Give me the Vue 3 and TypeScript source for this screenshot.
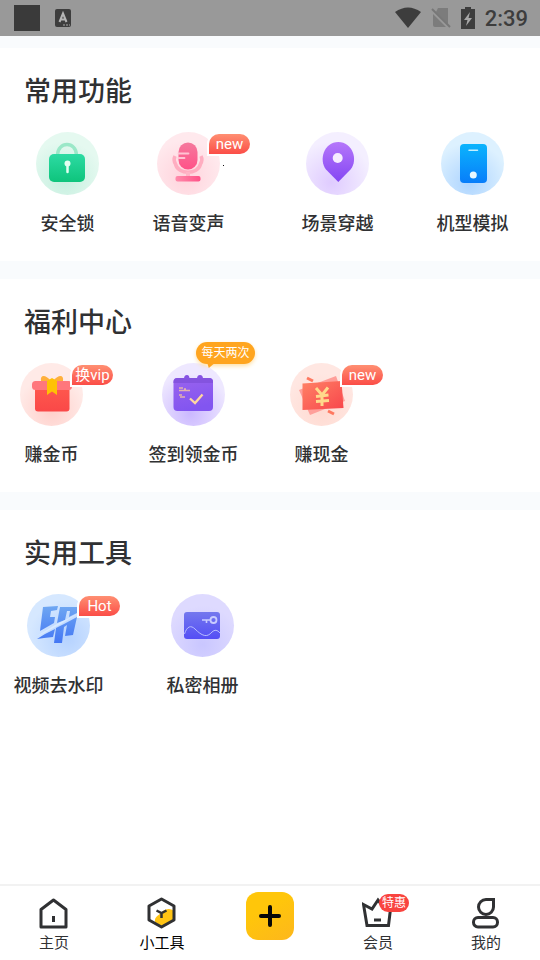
<script setup lang="ts">
type IconName = 'lock' | 'mic' | 'pin' | 'phone' | 'gift' | 'calendar' | 'cash' | 'watermark' | 'album'

interface Tool {
  icon: IconName
  label: string
  badge?: string
  badgeStyle?: 'flag' | 'bubble'
}

interface Section {
  title: string
  tools: Tool[]
}

const sections: Section[] = [
  {
    title: '常用功能',
    tools: [
      { icon: 'lock', label: '安全锁' },
      { icon: 'mic', label: '语音变声', badge: 'new', badgeStyle: 'flag' },
      { icon: 'pin', label: '场景穿越' },
      { icon: 'phone', label: '机型模拟' },
    ],
  },
  {
    title: '福利中心',
    tools: [
      { icon: 'gift', label: '赚金币', badge: '换vip', badgeStyle: 'flag' },
      { icon: 'calendar', label: '签到领金币', badge: '每天两次', badgeStyle: 'bubble' },
      { icon: 'cash', label: '赚现金', badge: 'new', badgeStyle: 'flag' },
    ],
  },
  {
    title: '实用工具',
    tools: [
      { icon: 'watermark', label: '视频去水印', badge: 'Hot', badgeStyle: 'flag' },
      { icon: 'album', label: '私密相册' },
    ],
  },
]

// The badge sticks out past the circle; wider labels already cover part of it.
function spaceClass(tool: Tool): string {
  if (!tool.badge) return ''
  return `space-${Math.min(tool.label.length, 5)}`
}
</script>

<template>
  <div class="page">
    <header class="status">
      <div class="status-left">
        <span class="square"></span>
        <svg width="16" height="18" viewBox="0 0 16 18" aria-hidden="true">
          <rect width="16" height="18" rx="2" fill="#3d3d3d" />
          <path d="M4.500 13L8 4.500L11.500 13M5.500 10.500H10.500" fill="none" stroke="#b5b5b5" stroke-width="2" />
          <path d="M8 16H15" stroke="#aaa" stroke-width="1" stroke-dasharray="2 1" />
        </svg>
      </div>
      <div class="status-right">
        <svg width="26" height="22" viewBox="0 0 26 22" aria-hidden="true">
          <path d="M0 5Q13 -4 26 5L13 21Z" fill="#3d3d3d" />
        </svg>
        <svg width="20" height="22" viewBox="0 0 20 22" aria-hidden="true">
          <path d="M7 1H17V17L5 5ZM2 7L15 20H4Q2 20 2 18Z" fill="#7c7c7c" />
          <path d="M1 2L19 20" stroke="#777" stroke-width="2" />
        </svg>
        <svg width="14" height="22" viewBox="0 0 14 22" aria-hidden="true">
          <path d="M4 0H10V2H14V22H0V2H4Z" fill="#3d3d3d" />
          <path d="M9 5L3 13H6.500L5 19L11 11H7.500Z" fill="#a8a8a8" />
        </svg>
        <time>2:39</time>
      </div>
    </header>

    <main class="content">
      <section v-for="section in sections" :key="section.title" class="group">
        <h2>{{ section.title }}</h2>
        <div class="tools">
          <button v-for="tool in section.tools" :key="tool.label" type="button" class="tool" :class="spaceClass(tool)">
            <span class="figure">
              <span class="circle" :class="tool.icon">
                <svg v-if="tool.icon === 'lock'" viewBox="0 0 63 63" aria-hidden="true">
                  <defs>
                    <linearGradient id="lockFill" x1="0" y1="0" x2="0" y2="1"><stop stop-color="#2ddba3" /><stop offset="1" stop-color="#0ec47c" /></linearGradient>
                  </defs>
                  <path d="M21.500 23C22 9 40 9 40.500 23" fill="none" stroke="#9be8c8" stroke-width="3.500" />
                  <rect x="13" y="22" width="36" height="28" rx="5" fill="url(#lockFill)" />
                  <circle cx="31.500" cy="31.500" r="3" fill="#e3fff1" />
                  <path d="M31.500 32V40" stroke="#e3fff1" stroke-width="2.500" stroke-linecap="round" />
                </svg>
                <svg v-else-if="tool.icon === 'mic'" viewBox="0 0 63 63" aria-hidden="true">
                  <defs>
                    <linearGradient id="micFill" x1="0" y1="0" x2="0" y2="1"><stop stop-color="#f5799d" /><stop offset="1" stop-color="#ff5288" /></linearGradient>
                    <linearGradient id="micBase"><stop stop-color="#ff8bab" /><stop offset="1" stop-color="#ff5288" /></linearGradient>
                  </defs>
                  <path d="M18 24Q16 28 18.500 32C21 43 41 43 43.500 32Q46 28 44 24" fill="none" stroke="#ffadc0" stroke-width="3.500" />
                  <path d="M31 40V45" stroke="#ffb5c7" stroke-width="4" />
                  <rect x="21.500" y="10.500" width="19" height="27" rx="9.500" fill="url(#micFill)" />
                  <path d="M21.500 21.500H31.500M21.500 26H27.500" stroke="#ffc3d3" stroke-width="1.800" stroke-linecap="round" />
                  <rect x="18.500" y="44" width="25" height="5.500" rx="2" fill="url(#micBase)" />
                  <rect x="66" y="33" width="1" height="1" fill="#111" />
                </svg>
                <svg v-else-if="tool.icon === 'pin'" viewBox="0 0 63 63" aria-hidden="true">
                  <defs>
                    <linearGradient id="pinFill" x1="0" y1="0" x2="0" y2="1"><stop stop-color="#b577fa" /><stop offset="1" stop-color="#8446f3" /></linearGradient>
                  </defs>
                  <path d="M32.300 50L20 37.500C12.500 28 18 10 32.300 10C46.500 10 52.500 28 44.500 37.500Z" fill="url(#pinFill)" />
                  <circle cx="31.700" cy="26" r="5" fill="#f6ecff" />
                </svg>
                <svg v-else-if="tool.icon === 'phone'" viewBox="0 0 63 63" aria-hidden="true">
                  <defs>
                    <linearGradient id="phoneFill" x1="0" y1="0" x2="0" y2="1"><stop stop-color="#0bb4fd" /><stop offset="1" stop-color="#087dfa" /></linearGradient>
                  </defs>
                  <rect x="19" y="12" width="27" height="39" rx="4" fill="url(#phoneFill)" />
                  <path d="M28 18.300H36.500" stroke="#c4efff" stroke-width="1.500" stroke-linecap="round" />
                  <circle cx="32.300" cy="43" r="3.500" fill="#e8f7ff" />
                </svg>
                <svg v-else-if="tool.icon === 'gift'" viewBox="0 0 63 63" aria-hidden="true">
                  <defs>
                    <linearGradient id="giftFill" x1="0" y1="0" x2="0" y2="1"><stop stop-color="#ff5b4e" /><stop offset="1" stop-color="#fa4848" /></linearGradient>
                  </defs>
                  <rect x="15" y="20" width="34.500" height="28.500" rx="3" fill="url(#giftFill)" />
                  <rect x="12" y="18" width="40" height="9" rx="3.500" fill="#ff777c" />
                  <path d="M31 18C25 11 20 12 21 18ZM33 18C39 11 44 12 43 18Z" fill="#ffb03c" />
                  <path d="M27 18L32 15L37 18V32L32 28.500L27 32Z" fill="#ffc104" />
                </svg>
                <svg v-else-if="tool.icon === 'calendar'" viewBox="0 0 63 63" aria-hidden="true">
                  <defs>
                    <linearGradient id="calFill" x1="0" y1="0" x2="0.300" y2="1"><stop stop-color="#9a63ee" /><stop offset="1" stop-color="#8255f0" /></linearGradient>
                  </defs>
                  <rect x="11.500" y="15" width="39.500" height="33" rx="4" fill="url(#calFill)" />
                  <path d="M11.500 20V19Q11.500 15 15.500 15H47Q51 15 51 19V20Z" fill="#8453df" />
                  <path d="M22 16Q22 12 25 12Q27.500 12 27.500 16ZM35 16Q35 12 38 12Q41 12 41 16Z" fill="#8653e3" />
                  <path d="M17 25H21M17 27.500H28M22 26H24M17 32H20M18 34H23" fill="none" stroke="#e3b4ae" stroke-width="1.500" />
                  <path d="M28 35.500L33 40L40.500 31.500" fill="none" stroke="#ffd6a0" stroke-width="2.300" />
                </svg>
                <svg v-else-if="tool.icon === 'cash'" viewBox="0 0 63 63" aria-hidden="true">
                  <defs>
                    <linearGradient id="cashFill" x1="0" y1="0" x2="1" y2="1"><stop stop-color="#ff8266" /><stop offset="1" stop-color="#f8454b" /></linearGradient>
                  </defs>
                  <path d="M9 27L46 13L55 38L20 52Z" fill="#ff9f9a" />
                  <path d="M12.500 20.500L51.500 18L53.500 45L12.500 47Z" fill="url(#cashFill)" />
                  <path d="M17 15L23 18M38 48L44 51" stroke="#ff7860" stroke-width="3" />
                  <path d="M26 25L32 32L38 24.500M26 33.500L38.500 32M26 38.500L39 37.500M32 32V43" fill="none" stroke="#ffd98b" stroke-width="3" />
                </svg>
                <svg v-else-if="tool.icon === 'watermark'" viewBox="0 0 63 63" aria-hidden="true">
                  <defs>
                    <linearGradient id="markFill" x1="0" y1="0" x2="0" y2="63" gradientUnits="userSpaceOnUse"><stop offset="0.200" stop-color="#6ea6f2" /><stop offset="0.800" stop-color="#4275f4" /></linearGradient>
                  </defs>
                  <g fill="url(#markFill)">
                    <path d="M16 13L31 12L30 16L24 17L23 23H28L27 29L13 37Z" />
                    <path d="M10 45L18 40L28 35L26 43L17 44Z" />
                    <path d="M33 13H51L50 19L42 23L43 17H40L38 26L30 29Z" />
                    <path d="M29 34L37 30L50 23L46 41L38 42L40 31L37 33L35 49H27Z" />
                  </g>
                  <path d="M10 42L28 31L52 19L34 30L17 39Z" fill="#d8eaff" />
                </svg>
                <svg v-else viewBox="0 0 63 63" aria-hidden="true">
                  <defs>
                    <linearGradient id="albumFill" x1="0" y1="0" x2="0" y2="1"><stop stop-color="#7478ee" /><stop offset="1" stop-color="#544ef5" /></linearGradient>
                  </defs>
                  <rect x="13" y="18" width="36" height="27" rx="3" fill="url(#albumFill)" />
                  <path d="M13.500 40C16 32 20 31 24 35C31 42 36 44 41 38Q45 34 49 39" fill="none" stroke="#b9bdff" stroke-width="1" />
                  <circle cx="42.500" cy="26" r="3" fill="none" stroke="#c9ccff" stroke-width="1.800" />
                  <path d="M39.500 26H31M35.500 26V29" fill="none" stroke="#c9ccff" stroke-width="1.600" />
                </svg>
              </span>
              <span v-if="tool.badge" class="badge" :class="tool.badgeStyle">{{ tool.badge }}</span>
            </span>
            <span class="label">{{ tool.label }}</span>
          </button>
        </div>
      </section>
    </main>

    <nav class="tabs">
      <a href="#home">
        <svg viewBox="0 0 32 34" aria-hidden="true">
          <path d="M15.500 5L28 14.500V32H3V14.500Z" fill="none" stroke="#303133" stroke-width="3" stroke-linejoin="round" />
          <path d="M15.500 21V27" stroke="#303133" stroke-width="3" />
        </svg>
        <span>主页</span>
      </a>
      <a href="#tools" class="active" aria-current="page">
        <svg viewBox="0 0 32 34" aria-hidden="true">
          <path d="M9 27C8 21 14 20 17 16Q23 12 28 16V25L15.500 31Z" fill="#ffc414" />
          <path d="M15.500 4L28 11V25L15.500 32L3 25V11Z" fill="none" stroke="#303133" stroke-width="3" stroke-linejoin="round" />
          <path d="M10.500 15.500L15.500 18L20.500 15.500M15.500 18V23" fill="none" stroke="#303133" stroke-width="2.500" />
        </svg>
        <span>小工具</span>
      </a>
      <button type="button" class="add" aria-label="添加">
        <svg viewBox="0 0 48 48" aria-hidden="true">
          <path d="M24 15V33M15 24H33" stroke="#080808" stroke-width="4" stroke-linecap="round" />
        </svg>
      </button>
      <a href="#member">
        <span class="crown">
          <svg viewBox="0 0 32 34" aria-hidden="true">
            <path d="M1.500 9.500L10 14L16 5L22 13L29 10L26.500 30.500H5Z" fill="none" stroke="#303133" stroke-width="3" />
            <path d="M12 25H19" stroke="#303133" stroke-width="3" />
          </svg>
          <span class="offer">特惠</span>
        </span>
        <span>会员</span>
      </a>
      <a href="#mine">
        <svg viewBox="0 0 32 34" aria-hidden="true">
          <path d="M23.500 4.500V12A7.500 7.500 0 1 1 16 4.500Z" fill="none" stroke="#303133" stroke-width="3" />
          <rect x="3.500" y="22.500" width="24" height="9.500" rx="4.500" fill="none" stroke="#303133" stroke-width="3" />
        </svg>
        <span>我的</span>
      </a>
    </nav>
  </div>
</template>

<style>
body {
  margin: 0;
  background: #fff;
}
</style>

<style scoped>
.page {
  display: flex;
  flex-direction: column;
  min-height: 100vh;
  color: #303133;
  font-family: Roboto, "Noto Sans CJK SC", sans-serif;
}

.page * {
  box-sizing: border-box;
}

svg {
  display: block;
}

button {
  padding: 0;
  border: 0;
  background: none;
  color: inherit;
  font: inherit;
  cursor: pointer;
}

.status {
  display: flex;
  align-items: center;
  justify-content: space-between;
  height: 36px;
  padding: 0 12px 0 14px;
  background: #999;
}

.status-left {
  display: flex;
  align-items: center;
  gap: 15px;
}

.square {
  width: 26px;
  height: 26px;
  background: #3a3a3a;
}

.status-right {
  display: flex;
  align-items: center;
  gap: 10px;
}

time {
  padding-top: 2px;
  color: #3d3d3d;
  font-size: 22px;
  font-weight: 500;
  line-height: 34px;
}

.content {
  display: flex;
  flex: 1;
  flex-direction: column;
  gap: 18px;
  padding-top: 12px;
  background: #f9fbfd;
}

.group {
  padding: 24px 0 22px;
  background: #fff;
}

.group:last-child {
  flex: 1;
}

h2 {
  margin: 0 0 20px;
  padding: 0 24px;
  font-size: 27px;
  font-weight: 500;
  line-height: 40px;
}

.tools {
  display: grid;
  grid-template-columns: repeat(4, 1fr);
  justify-items: center;
}

.tool {
  display: flex;
  flex-direction: column;
  align-items: center;
  gap: 14px;
}

.space-3 {
  padding-right: 32px;
}

.space-4 {
  padding-right: 28px;
}

.space-5 {
  padding-right: 18px;
}

.figure {
  position: relative;
}

.circle {
  display: block;
  width: 63px;
  height: 63px;
  border-radius: 50%;
}

.circle svg {
  overflow: visible;
}

.lock {
  background: radial-gradient(circle at 45% 75%, #c5efdf, #e5f9f0 65%);
}

.mic {
  background: radial-gradient(circle at 45% 70%, #ffd3dc, #ffe9ed 65%);
}

.pin {
  background: radial-gradient(circle at 40% 80%, #dfcbff, #f4efff 65%);
}

.phone {
  background: radial-gradient(circle at 45% 80%, #add4ff, #ddf1ff 65%);
}

.gift {
  background: radial-gradient(circle at 50% 75%, #ffcfca, #ffeae7 60%);
}

.calendar {
  background: radial-gradient(circle at 45% 80%, #cbb8ff, #eee8ff 65%);
}

.cash {
  background: radial-gradient(circle at 50% 75%, #ffdad1, #ffe7e2 65%);
}

.watermark {
  background: radial-gradient(circle at 65% 70%, #b5d2ff, #d6e8ff 65%);
}

.album {
  background: radial-gradient(circle at 50% 80%, #c9c6ff, #dedaff 65%);
}

.badge {
  position: absolute;
  color: #fff;
  white-space: nowrap;
}

.flag {
  top: 2px;
  left: 52px;
  width: 41px;
  height: 20px;
  border-radius: 10px 10px 10px 0;
  background: linear-gradient(#ff8f72, #fb4d47);
  box-shadow: 0 0 0 2px #fff;
  font-size: 15px;
  line-height: 20px;
}

.bubble {
  top: -21px;
  left: 34px;
  width: 59px;
  height: 22px;
  border-radius: 11px;
  background: #ffa51f;
  box-shadow: 0 2px 4px #ffe0a6;
  font-size: 12px;
  line-height: 22px;
}

.bubble::after {
  position: absolute;
  bottom: -4px;
  left: 11px;
  width: 9px;
  height: 6px;
  background: #ffa51f;
  clip-path: polygon(0 0, 100% 0, 20% 100%);
  content: "";
}

.label {
  font-size: 18px;
  font-weight: 500;
  line-height: 30px;
  white-space: nowrap;
}

.tabs {
  position: sticky;
  bottom: 0;
  display: grid;
  grid-template-columns: repeat(5, 1fr);
  justify-items: center;
  height: 76px;
  padding-top: 9px;
  border-top: 2px solid #f2f2f2;
  background: #fff;
}

.tabs a {
  display: flex;
  flex-direction: column;
  align-items: center;
  color: #303133;
  font-size: 15px;
  line-height: 28px;
  text-decoration: none;
}

.tabs a svg {
  width: 32px;
  height: 34px;
}

.tabs .active {
  color: #000;
}

.add {
  width: 48px;
  height: 48px;
  margin-top: -3px;
  border-radius: 12px;
  background: linear-gradient(150deg, #ffc60a 35%, #fdb71c);
}

.crown {
  position: relative;
}

.offer {
  position: absolute;
  top: -1px;
  left: 17px;
  width: 30px;
  height: 18px;
  border-radius: 9px;
  background: #f9443f;
  color: #fff;
  font-size: 12px;
  line-height: 18px;
  text-align: center;
}
</style>
